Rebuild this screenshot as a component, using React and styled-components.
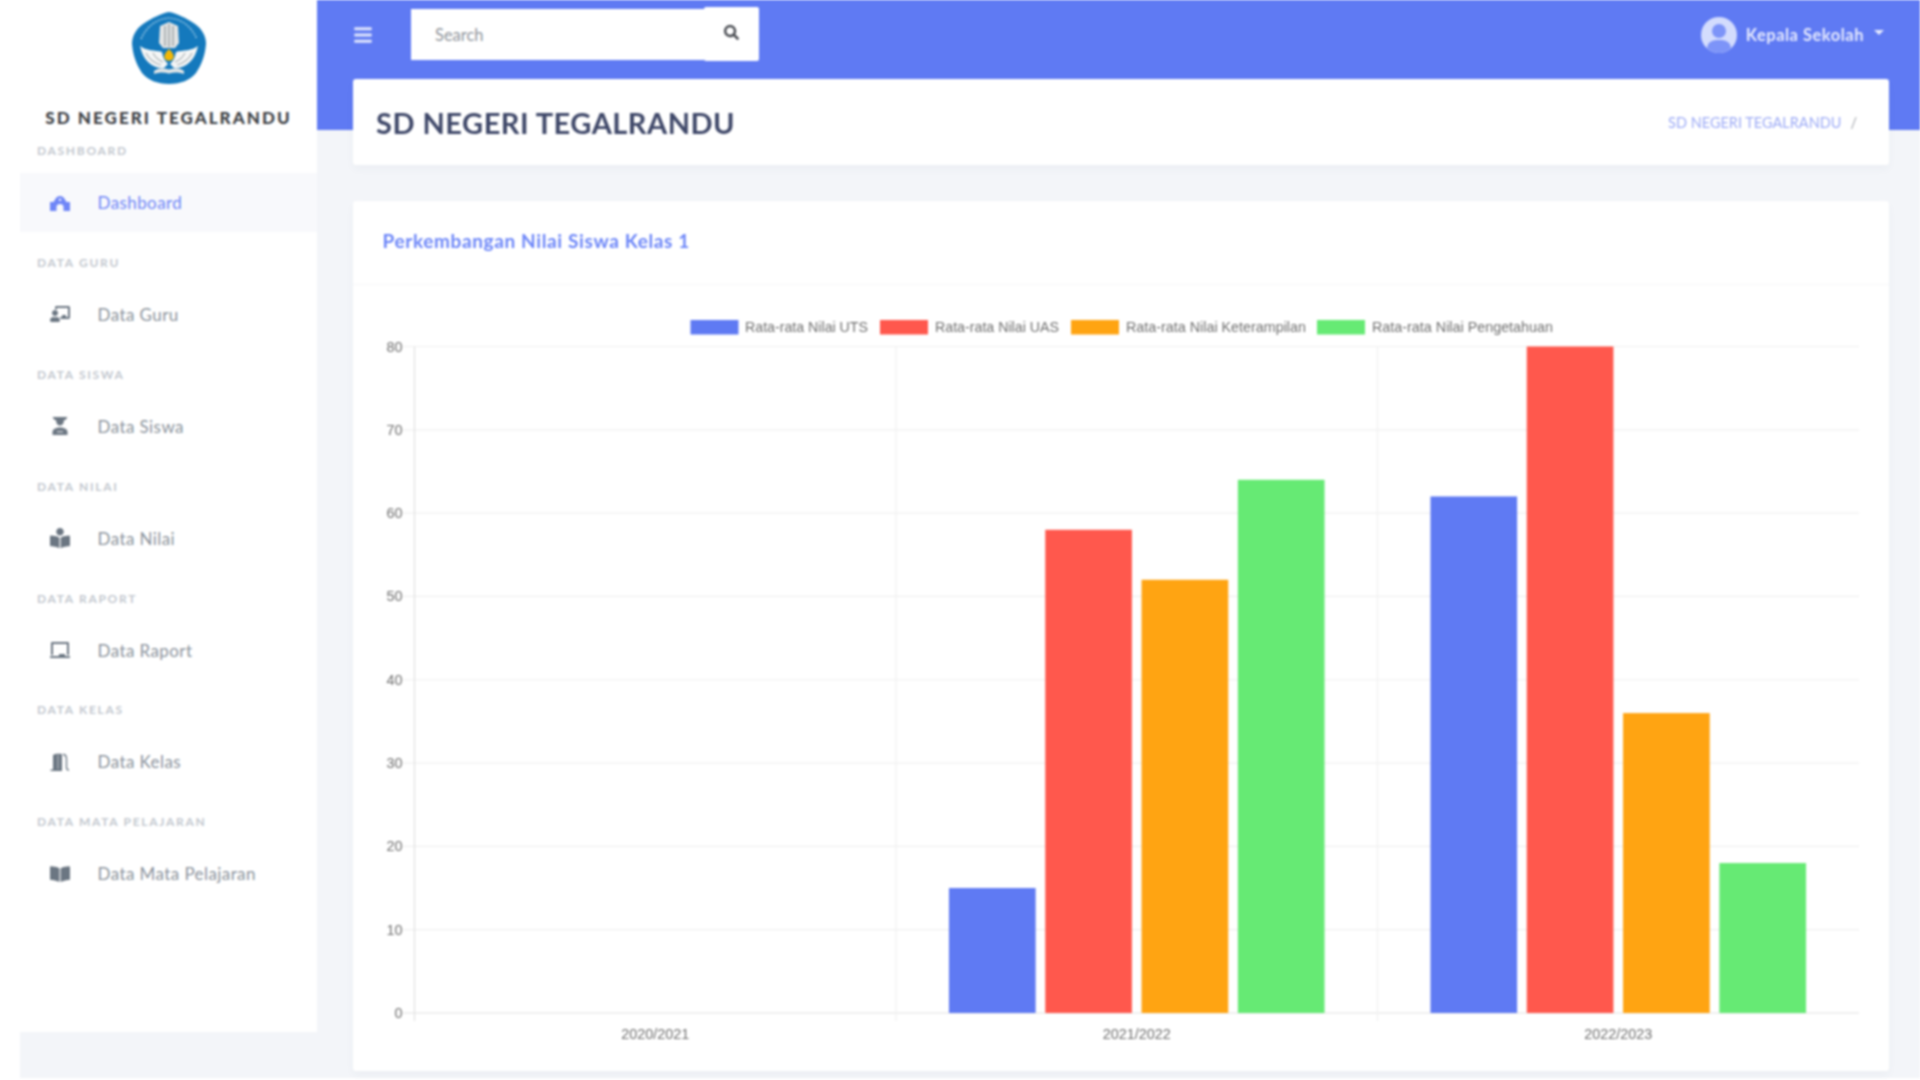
import React from "react";
import styled, { createGlobalStyle } from "styled-components";
import {
  FaBars,
  FaBookOpen,
  FaBookReader,
  FaChalkboard,
  FaChalkboardTeacher,
  FaSearch,
} from "react-icons/fa";

const FONT = '"Lato", "Noto Sans", sans-serif';
const BLUE = "#5f7af3";

const Global = createGlobalStyle`
  html, body { margin: 0; padding: 0; background: #fff; }
  body { font-family: ${FONT}; width: 1920px; height: 1080px; overflow: hidden; }
  * { box-sizing: border-box; }
`;

const Shell = styled.div`
  display: flex;
  width: 1900px;
  height: 1078px;
  margin-left: 20px;
  background: #f3f5f9;
  filter: blur(0.9px);
`;

const Sidebar = styled.aside`
  flex: 0 0 297px;
  height: 1032px;
  background: #fff;
  display: flex;
  flex-direction: column;
`;

const Brand = styled.div`
  display: flex;
  flex-direction: column;
  align-items: center;
  height: 143px;
  padding-top: 11px;
`;

const BrandName = styled.div`
  margin-top: 22px;
  font-size: 17px;
  line-height: 22px;
  font-weight: 900;
  letter-spacing: 2.05px;
  color: #3c3f44;
  white-space: nowrap;
`;

const Group = styled.div`
  display: flex;
  flex-direction: column;
  height: 111.9px;
`;

const GroupLabel = styled.div`
  height: 30px;
  padding-left: 17px;
  font-size: 12px;
  line-height: 16px;
  font-weight: 700;
  letter-spacing: 1.7px;
  color: #c2c7ce;
  white-space: nowrap;
`;

const Item = styled.div`
  display: flex;
  align-items: center;
  height: 59px;
  padding-left: 30px;
  font-size: 17px;
  letter-spacing: 0.42px;
  color: ${(p) => (p.$active ? "#6f86f7" : "#8b939c")};
  background: ${(p) => (p.$active ? "#f8f9fc" : "transparent")};
  svg {
    flex: 0 0 20px;
    font-size: 20px;
    margin-right: 27.5px;
    color: ${(p) => (p.$active ? "#6f86f7" : "#6b7682")};
  }
`;

const Main = styled.main`
  flex: 1;
  min-width: 0;
  display: flex;
  flex-direction: column;
`;

const TopBar = styled.header`
  flex: 0 0 130px;
  background: ${BLUE};
  display: flex;
  align-items: flex-start;
  padding: 7px 36px 0 36px;
  color: #fff;
`;

const MenuToggle = styled.div`
  display: flex;
  align-items: center;
  height: 55px;
  font-size: 20px;
  color: #dfe5fd;
`;

const SearchBox = styled.div`
  display: flex;
  align-items: center;
  margin-left: 38px;
`;

const SearchInput = styled.div`
  width: 293px;
  height: 51px;
  margin-top: 1px;
  padding: 1px 0 0 24px;
  background: #fff;
  color: #8f949b;
  font-size: 16.5px;
  display: flex;
  align-items: center;
`;

const SearchButton = styled.div`
  width: 55px;
  height: 54px;
  background: #fff;
  border-radius: 2px;
  color: #44474d;
  display: flex;
  align-items: center;
  justify-content: center;
  font-size: 15px;
  padding-bottom: 3px;
`;

const UserMenu = styled.div`
  margin-left: auto;
  height: 55px;
  display: flex;
  align-items: center;
  font-size: 16.5px;
  font-weight: 700;
  letter-spacing: 0.5px;
  color: #e6eafe;
`;

const Avatar = styled.div`
  width: 36px;
  height: 36px;
  margin-right: 9px;
  display: flex;
`;

const Caret = styled.span`
  width: 0;
  height: 0;
  margin-left: 10px;
  margin-bottom: 5px;
  border-left: 5px solid transparent;
  border-right: 5px solid transparent;
  border-top: 5px solid #e6eafe;
`;

const Content = styled.div`
  margin-top: -51px;
  padding: 0 31px 0 36px;
  display: flex;
  flex-direction: column;
  gap: 36px;
`;

const TitleCard = styled.section`
  height: 86px;
  background: #fff;
  border-radius: 3px;
  box-shadow: 0 4px 8px rgba(60, 70, 110, 0.04);
  display: flex;
  align-items: center;
  justify-content: space-between;
  padding: 0 32px 0 23px;
`;

const PageTitle = styled.h1`
  margin: 0;
  font-size: 29px;
  font-weight: 700;
  letter-spacing: 0.5px;
  color: #3f4869;
`;

const Crumbs = styled.div`
  display: flex;
  align-items: center;
  gap: 9px;
  font-size: 14.5px;
  color: #9dabf6;
  span { color: #a4a7ad; }
`;

const ChartCard = styled.section`
  height: 870px;
  background: #fff;
  border-radius: 3px;
  box-shadow: 0 4px 8px rgba(60, 70, 110, 0.04);
  display: flex;
  flex-direction: column;
`;

const CardHead = styled.div`
  flex: 0 0 84px;
  border-bottom: 1px solid #f6f7f9;
  display: flex;
  align-items: center;
  padding-left: 29.5px;
  padding-bottom: 4px;
  font-size: 19px;
  font-weight: 700;
  letter-spacing: 0.63px;
  color: #6b85f8;
`;

const ChartFrame = styled.div`
  flex: 1;
  svg { display: block; }
  text { font-family: "Liberation Sans", Arial, sans-serif; font-size: 14.4px; fill: #6f6f6f; }
`;

const SchoolIcon = () => (
  <svg width="20" height="16" viewBox="0 0 20 16" fill="currentColor">
    <path
      fillRule="evenodd"
      d="M0 16 V7 H3.5 L6 3 C8 0.2 12 0.2 14 3 L16.500 7 H20 V16 H13.500 V11.500 C13.500 8 6.500 8 6.500 11.500 V16 Z M10 3.400 a1.300 1.300 0 1 0 0.01 0 Z"
    />
  </svg>
);

const StudentIcon = () => (
  <svg width="20" height="18" viewBox="0 0 20 18" fill="currentColor">
    <path d="M2.500 0 H17.500 L15.500 3 H14 C14 6.500 12.500 8.500 10 8.500 C7.500 8.500 6 6.500 6 3 H4.500 Z" />
    <path d="M2.500 18 V15 C2.500 12 6 10.500 10 10.500 C14 10.500 17.500 12 17.500 15 V18 Z" />
    <path d="M7 14 H13 V15.500 H7 Z" fill="#fff" opacity="0.6" />
  </svg>
);

const ClassIcon = () => (
  <svg width="20" height="18" viewBox="0 0 20 18" fill="currentColor">
    <path d="M3 17 V2 C5 0.500 9 0.500 12 1 V17 Z" />
    <path d="M0.500 17.250 H12" stroke="currentColor" strokeWidth="1.500" />
    <path d="M8 2 V16" stroke="#fff" strokeWidth="0.900" opacity="0.6" />
    <path d="M13 1.500 C15.500 1.500 16.500 3 16.500 6 V14.500 C16.500 16 17.500 17 19 17" fill="none" stroke="currentColor" strokeWidth="1.300" />
  </svg>
);

const NAV = [
  ["DASHBOARD", "Dashboard", SchoolIcon, true],
  ["DATA GURU", "Data Guru", FaChalkboardTeacher],
  ["DATA SISWA", "Data Siswa", StudentIcon],
  ["DATA NILAI", "Data Nilai", FaBookReader],
  ["DATA RAPORT", "Data Raport", FaChalkboard],
  ["DATA KELAS", "Data Kelas", ClassIcon],
  ["DATA MATA PELAJARAN", "Data Mata Pelajaran", FaBookOpen],
];

const COLORS = ["#5f7af3", "#ff584d", "#ffa412", "#66ea74"];
const SERIES = [
  { name: "Rata-rata Nilai UTS", box: 690.5, text: 745, len: 123, v: [0, 15, 62] },
  { name: "Rata-rata Nilai UAS", box: 880, text: 935, len: 124, v: [0, 58, 80] },
  { name: "Rata-rata Nilai Keterampilan", box: 1071, text: 1126, len: 180, v: [0, 52, 36] },
  { name: "Rata-rata Nilai Pengetahuan", box: 1317, text: 1372, len: 181, v: [0, 64, 18] },
];
const OX = 353;
const OY = 285;
const L = 414.5 - OX;
const R = 1859 - OX;
const T = 346.5 - OY;
const B = 1013 - OY;
const CW = (R - L) / 3;
const yAt = (v) => B - ((B - T) * v) / 80;

function Chart() {
  const ticks = [0, 10, 20, 30, 40, 50, 60, 70, 80];
  const years = ["2020/2021", "2021/2022", "2022/2023"];
  return (
    <svg width="1536" height="785" viewBox="0 0 1536 785">
      {SERIES.map((s, i) => (
        <g key={s.name}>
          <rect x={s.box - OX} y={320 - OY} width={48} height={14.5} fill={COLORS[i]} />
          <text x={s.text - OX} y={332 - OY} textLength={s.len} lengthAdjust="spacingAndGlyphs">
            {s.name}
          </text>
        </g>
      ))}
      {ticks.map((t) => (
        <g key={t}>
          <line x1={L - 12} x2={R} y1={yAt(t)} y2={yAt(t)} stroke={t === 0 ? "#e2e2e2" : "#f0f0f0"} strokeWidth="1.2" />
          <text x={L - 12} y={yAt(t) + 5} textAnchor="end">{t}</text>
        </g>
      ))}
      {[0, 1, 2].map((i) => (
        <line key={i} x1={L + CW * i} x2={L + CW * i} y1={T} y2={B + 8} stroke={i === 0 ? "#e2e2e2" : "#f0f0f0"} strokeWidth="1.2" />
      ))}
      {years.map((y, i) => (
        <text key={y} x={L + CW * (i + 0.5)} y={B + 26} textAnchor="middle">{y}</text>
      ))}
      {SERIES.map((s, si) =>
        s.v.map((v, ci) =>
          v > 0 ? (
            <rect
              key={ci}
              x={L + CW * ci + CW * 0.1 + CW * 0.2 * si + CW * 0.01}
              y={yAt(v)}
              width={CW * 0.18}
              height={B - yAt(v)}
              fill={COLORS[si]}
            />
          ) : null
        )
      )}
    </svg>
  );
}

function Logo() {
  return (
    <svg width="76" height="74" viewBox="0 0 76 74">
      <path d="M38 1 C45 2 55 7 64 13 C71 18 75 25 75 33 C74 44 71 53 65 62 C59 69 50 73 38 73 C26 73 17 69 11 62 C5 53 2 44 1 33 C1 25 5 18 12 13 C21 7 31 2 38 1 Z" fill="#1479bd" />
      <path d="M10 28 C17 13 27 8 38 7 C49 8 59 13 66 28" fill="none" stroke="#8fc2e2" strokeWidth="1.6" strokeDasharray="2 1.200" />
      <path d="M29 15 L38 11 L47 15 L48 32 L44 37 H32 L28 32 Z" fill="#e3e5e5" />
      <path d="M34 15 V35 M38 13 V36 M42 15 V35" stroke="#8d9699" strokeWidth="1.200" />
      <path d="M9 35 C15 40 24 39 31 41 C32 47 34 50 37 53 L33 57 C22 58 12 50 9 35 Z" fill="#f5f6f6" />
      <path d="M67 35 C61 40 52 39 45 41 C44 47 42 50 39 53 L43 57 C54 58 64 50 67 35 Z" fill="#f5f6f6" />
      <path d="M15 42 C18 48 23 52 30 54 M22 42 C24 46 27 49 32 51 M61 42 C58 48 53 52 46 54 M54 42 C52 46 49 49 44 51" fill="none" stroke="#a9b1b4" strokeWidth="1.100" />
      <path d="M38 38 C41 41 43.500 44 42.500 47 C41 50.500 35 50.500 33.500 47 C32.500 44 35 41 38 38 Z" fill="#f2b705" />
      <path d="M23 60 C28 56 33 57 38 58.500 C43 57 48 56 53 60 L53 63 C48 61 43 61 38 62.500 C33 61 28 61 23 63 Z" fill="#e4e7e7" />
    </svg>
  );
}

function UserAvatar() {
  return (
    <svg width="36" height="36" viewBox="0 0 36 36">
      <circle cx="18" cy="18" r="18" fill="#d3dcfd" />
      <circle cx="18" cy="14" r="7" fill="#7d94f8" />
      <path d="M6 31 C7 24 12 23 18 23 C24 23 29 24 30 31 C27 34.500 22 36 18 36 C14 36 9 34.500 6 31 Z" fill="#7d94f8" />
    </svg>
  );
}

export default function App() {
  return (
    <>
      <Global />
      <Shell>
        <Sidebar>
          <Brand>
            <Logo />
            <BrandName>SD NEGERI TEGALRANDU</BrandName>
          </Brand>
          {NAV.map(([label, text, Icon, active]) => (
            <Group key={label}>
              <GroupLabel>{label}</GroupLabel>
              <Item $active={active}>
                <Icon />
                {text}
              </Item>
            </Group>
          ))}
        </Sidebar>
        <Main>
          <TopBar>
            <MenuToggle><FaBars /></MenuToggle>
            <SearchBox>
              <SearchInput>Search</SearchInput>
              <SearchButton><FaSearch /></SearchButton>
            </SearchBox>
            <UserMenu>
              <Avatar><UserAvatar /></Avatar>
              Kepala Sekolah
              <Caret />
            </UserMenu>
          </TopBar>
          <Content>
            <TitleCard>
              <PageTitle>SD NEGERI TEGALRANDU</PageTitle>
              <Crumbs>SD NEGERI TEGALRANDU <span>/</span></Crumbs>
            </TitleCard>
            <ChartCard>
              <CardHead>Perkembangan Nilai Siswa Kelas 1</CardHead>
              <ChartFrame><Chart /></ChartFrame>
            </ChartCard>
          </Content>
        </Main>
      </Shell>
    </>
  );
}
